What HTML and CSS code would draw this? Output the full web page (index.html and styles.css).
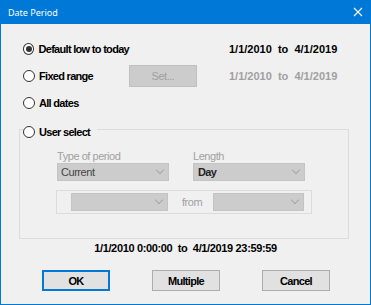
FILE: index.html
```html
<!DOCTYPE html>
<html lang="en">
<head>
    <meta charset="UTF-8">
    <title>Date Period</title>
    <link rel="stylesheet" href="styles.css">
</head>
<body>

    <div class="window">
        <div class="titlebar">
            <span class="title">Date Period</span>
            <svg class="close" width="10" height="10" viewBox="0 0 10 10">
                <path d="M1 1 L9 9 M9 1 L1 9" stroke="#fff" stroke-width="1.1" fill="none"/>
            </svg>
        </div>

        <div class="client">
            <!-- Period options -->
            <div class="options">
                <div class="opt-row">
                    <label class="radio checked"><span class="dot"></span>Default low to today</label>
                    <span></span>
                    <span class="range">1/1/2010  to  4/1/2019</span>
                </div>
                <div class="opt-row">
                    <label class="radio"><span class="dot"></span>Fixed range</label>
                    <button class="btn-set" disabled>Set...</button>
                    <span class="range grey">1/1/2010  to  4/1/2019</span>
                </div>
                <div class="opt-row">
                    <label class="radio"><span class="dot"></span>All dates</label>
                </div>
            </div>

            <!-- User select group -->
            <div class="group">
                <div class="group-head">
                    <label class="radio"><span class="dot"></span>User select</label>
                </div>
                <div class="fields">
                    <span class="field-label">Type of period</span>
                    <span class="field-label">Length</span>
                    <div class="combo"><span>Current</span><span class="chev"></span></div>
                    <div class="combo"><span class="bold">Day</span><span class="chev"></span></div>
                </div>
                <div class="inner-box">
                    <div class="combo small"><span></span><span class="chev"></span></div>
                    <span class="from">from</span>
                    <div class="combo mid"><span></span><span class="chev"></span></div>
                </div>
            </div>

            <div class="summary">1/1/2010 0:00:00  to  4/1/2019 23:59:59</div>

            <div class="buttons">
                <button class="btn default">OK</button>
                <button class="btn">Multiple</button>
                <button class="btn">Cancel</button>
            </div>
        </div>
    </div>

</body>
</html>
```

FILE: styles.css
```css
html, body {
    margin: 0;
    padding: 0;
}

body {
    background-color: #f0f0f0;
    font-family: "Liberation Sans", Arial, sans-serif;
    font-size: 11px;
    color: #000;
}

.window {
    width: 371px;
    height: 305px;
    box-sizing: border-box;
    border: 1px solid #0078d7;
    border-top: none;
    background-color: #f0f0f0;
}

.titlebar {
    height: 24px;
    margin: 0 -1px;
    background-color: #0078d7;
    display: flex;
    align-items: center;
    justify-content: space-between;
    padding: 0 8px 0 8px;
}

.title {
    font-family: "Noto Sans", sans-serif;
    font-size: 9px;
    color: #fff;
}

.options {
    padding: 14px 0 0 22px;
}

.opt-row {
    display: grid;
    grid-template-columns: 106px 68px auto;
    align-items: center;
    height: 22px;
    margin-bottom: 5px;
}

.radio {
    display: flex;
    align-items: center;
    gap: 4px;
    font-weight: bold;
    letter-spacing: -0.7px;
    line-height: 14px;
    white-space: nowrap;
}

.dot {
    width: 12px;
    height: 12px;
    box-sizing: border-box;
    border: 1px solid #333;
    border-radius: 50%;
    background-color: #fff;
    display: flex;
    align-items: center;
    justify-content: center;
}

.radio.checked .dot::after {
    content: "";
    width: 6px;
    height: 6px;
    border-radius: 50%;
    background-color: #333;
}

.range {
    font-weight: bold;
    white-space: pre;
    margin-left: 32px;
}

.range.grey {
    color: #a0a0a0;
}

.btn-set {
    width: 68px;
    height: 22px;
    background-color: #cccccc;
    border: 1px solid #bfbfbf;
    color: #a0a0a0;
    font-family: "Liberation Sans", Arial, sans-serif;
    font-size: 11px;
    letter-spacing: -0.45px;
    padding: 0;
}

/* group box */
.group {
    margin: 15px 0 0 18px;
    width: 330px;
    height: 110px;
    box-sizing: border-box;
    border: 1px solid #dcdcdc;
}

.group-head {
    margin: -5px 0 0 3px;
    width: fit-content;
    background-color: #f0f0f0;
    padding-right: 7px;
}

.fields {
    display: grid;
    grid-template-columns: 112px 112px;
    column-gap: 24px;
    margin-top: 11px;
    padding-left: 37px;
}

.field-label {
    color: #a0a0a0;
    letter-spacing: -0.45px;
    line-height: 13px;
}

.combo {
    height: 18px;
    box-sizing: border-box;
    background-color: #cccccc;
    border: 1px solid #c4c4c4;
    display: flex;
    align-items: center;
    justify-content: space-between;
    padding: 0 5px 0 3px;
    color: #444;
    letter-spacing: -0.45px;
}

.combo .bold {
    font-weight: bold;
    color: #222;
    letter-spacing: -0.7px;
    padding-left: 1px;
}

.chev {
    width: 5px;
    height: 5px;
    border-right: 1px solid #a8a8a8;
    border-bottom: 1px solid #a8a8a8;
    transform: rotate(45deg);
    margin-top: -4px;
}

.inner-box {
    margin: 9px 0 0 36px;
    width: 256px;
    height: 24px;
    box-sizing: border-box;
    border: 1px solid #dcdcdc;
    display: flex;
    align-items: center;
    padding-left: 14px;
}

.combo.small {
    width: 97px;
}

.combo.mid {
    width: 91px;
}

.from {
    width: 31px;
    padding-left: 14px;
    box-sizing: content-box;
    color: #a0a0a0;
    letter-spacing: -0.45px;
}

.summary {
    margin-top: 2px;
    line-height: 14px;
    text-align: center;
    font-weight: bold;
    white-space: pre;
    letter-spacing: -0.35px;
}

.buttons {
    display: flex;
    gap: 42px;
    margin-top: 15px;
    padding-left: 41px;
}

.btn {
    width: 68px;
    height: 21px;
    box-sizing: border-box;
    background-color: #e1e1e1;
    border: 1px solid #adadad;
    font-family: "Liberation Sans", Arial, sans-serif;
    font-size: 11px;
    font-weight: bold;
    letter-spacing: -0.7px;
    padding: 0;
    color: #000;
}

.btn.default {
    border: 2px solid #0078d7;
}
```
